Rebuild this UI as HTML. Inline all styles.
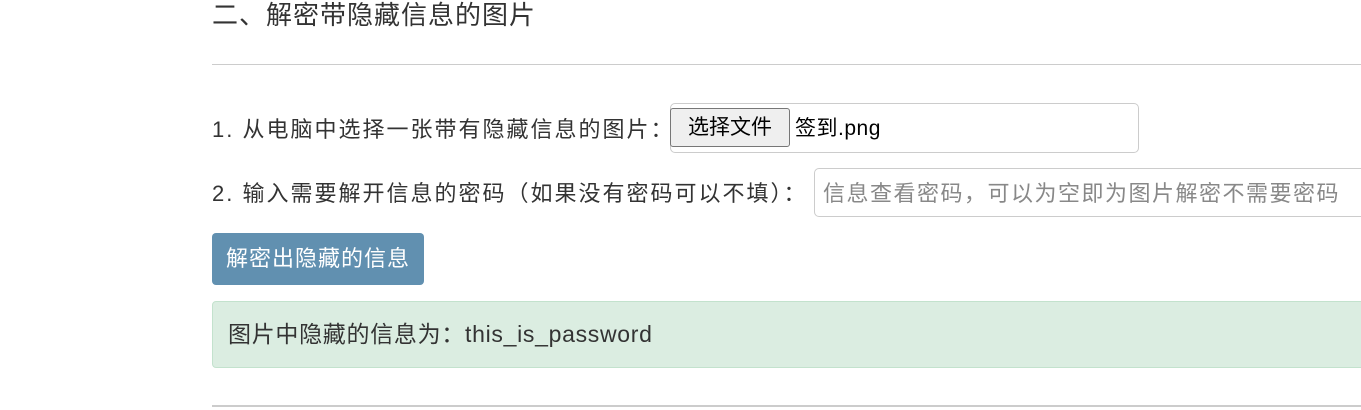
<!DOCTYPE html>
<html><head><meta charset="utf-8"><style>
body{margin:0;width:1361px;height:410px;overflow:hidden;background:#fff;font-family:"Liberation Sans","Noto Sans CJK SC",sans-serif;color:#333;position:relative}
.a{position:absolute;white-space:nowrap}
</style></head><body>
<div class="a" style="left:212px;top:0;font-size:26px;line-height:30px;letter-spacing:1px">二、解密带隐藏信息的图片</div>
<div class="a" style="left:212px;top:64px;width:1149px;height:1px;background:#ccc"></div>
<div class="a" style="left:212px;top:115px;font-size:22px;line-height:30px;letter-spacing:2px">1. 从电脑中选择一张带有隐藏信息的图片：</div>
<div class="a" style="left:670px;top:103px;width:469px;height:50px;border:1px solid #ccc;border-radius:5px;box-sizing:border-box"></div>
<div class="a" style="left:670px;top:108px;width:120px;height:39px;border:1px solid #777;border-radius:3px;background:#efefef;box-sizing:border-box;font-size:21px;line-height:37px;text-align:center;color:#000">选择文件</div>
<div class="a" style="left:795px;top:114px;font-size:21px;line-height:30px;color:#000;letter-spacing:0.5px">签到.png</div>
<div class="a" style="left:212px;top:179px;font-size:22px;line-height:30px;letter-spacing:2px">2. 输入需要解开信息的密码（如果没有密码可以不填）：</div>
<div class="a" style="left:814px;top:168px;width:560px;height:49px;border:1px solid #ccc;border-radius:5px;box-sizing:border-box;font-size:22px;line-height:49px;padding-left:8px;color:#888;letter-spacing:1.5px">信息查看密码，可以为空即为图片解密不需要密码</div>
<div class="a" style="left:212px;top:233px;width:212px;height:52px;background:#6190b0;border-radius:4px;color:#fff;font-size:22px;line-height:52px;text-align:center;letter-spacing:1px">解密出隐藏的信息</div>
<div class="a" style="left:212px;top:301px;width:1160px;height:67px;background:#dbede1;border:1px solid #c3e2cd;border-radius:4px;box-sizing:border-box"></div>
<div class="a" style="left:228px;top:319px;font-size:23px;line-height:30px;letter-spacing:0.7px">图片中隐藏的信息为：this_is_password</div>
<div class="a" style="left:212px;top:405px;width:1149px;height:2px;background:#ccc"></div>
</body></html>
